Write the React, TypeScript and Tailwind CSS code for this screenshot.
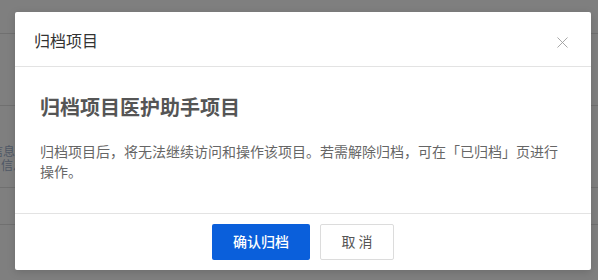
import { X } from "lucide-react";

const cjk = { fontFamily: '"Noto Sans CJK SC", "Noto Sans", sans-serif' };

export default function App() {
  return (
    <div className="relative w-[598px] h-[280px] overflow-hidden bg-[#7f7f7f]" style={cjk}>
      {/* dimmed page behind the mask */}
      <div className="flex flex-col">
        <div className="h-[34px] border-b border-[#707070]" />
        <div className="h-[72px] border-b border-[#707070]" />
        <div className="h-[82px] border-b border-[#707070] pt-[38px]">
          <div className="w-[15px] overflow-hidden flex flex-col text-[12px] leading-[14px] text-[#4f5866] whitespace-nowrap">
            <span className="-ml-[9px]">信息信</span>
            <span className="ml-[1px]">信息</span>
          </div>
        </div>
        <div className="h-[37px] border-b border-[#707070]" />
      </div>

      {/* modal */}
      <div className="absolute left-[15px] top-[12px] w-[576px] h-[258px] bg-white rounded-[2px] shadow-[0_2px_8px_rgba(0,0,0,0.15)] flex flex-col">
        <div className="h-[55px] flex items-center justify-between pl-[19px] pr-[19px] border-b border-[#e3e3e3]">
          <span className="text-[16px] text-[#333] pt-[2px]">归档项目</span>
          <X className="w-[19px] h-[19px] text-[#999] mt-[6px]" strokeWidth={1.1} />
        </div>
        <div className="flex-1 pl-[25px] pr-[15px] pt-[27px] border-b border-[#e3e3e3]">
          <h2 className="text-[20px] leading-[26px] font-bold text-[#555]">归档项目医护助手项目</h2>
          <p className="mt-[21px] w-[530px] text-[14px] leading-[20px] text-[#666]">
            归档项目后，将无法继续访问和操作该项目。若需解除归档，可在「已归档」页进行操作。
          </p>
        </div>
        <div className="h-[56px] flex items-center justify-center gap-[10px] pb-[1px]">
          <button className="w-[98px] h-[36px] rounded-[2px] bg-[#0a5fdb] text-white text-[14px] font-medium">
            确认归档
          </button>
          <button className="w-[74px] h-[36px] rounded-[2px] border border-[#dcdcdc] bg-white text-[#555] text-[14px]">
            取 消
          </button>
        </div>
      </div>
    </div>
  );
}
